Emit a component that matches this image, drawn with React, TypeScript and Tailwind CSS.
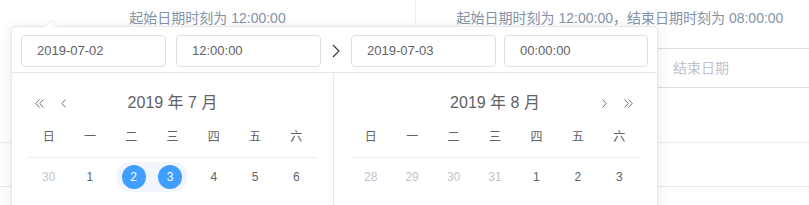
import React from 'react';

type Day = { n: number; muted?: boolean; start?: boolean; end?: boolean };

const WEEK = ['日', '一', '二', '三', '四', '五', '六'];

function DoubleChevron({ dir }: { dir: 'left' | 'right' }) {
  const d = dir === 'left' ? 'M4.5 0.5 L0.8 4.5 L4.5 8.5 M8.5 0.5 L4.8 4.5 L8.5 8.5' : 'M0.5 0.5 L4.2 4.5 L0.5 8.5 M4.5 0.5 L8.2 4.5 L4.5 8.5';
  return (
    <svg width="9" height="9" viewBox="0 0 9 9" fill="none">
      <path d={d} stroke="#606266" strokeWidth="0.9" />
    </svg>
  );
}

function Chevron({ dir }: { dir: 'left' | 'right' }) {
  const d = dir === 'left' ? 'M4.5 0.5 L0.8 4.5 L4.5 8.5' : 'M0.5 0.5 L4.2 4.5 L0.5 8.5';
  return (
    <svg width="5" height="9" viewBox="0 0 5 9" fill="none">
      <path d={d} stroke="#606266" strokeWidth="0.9" />
    </svg>
  );
}

function TimeInput({ value, width }: { value: string; width: string }) {
  return (
    <div className={`${width} h-[32px] shrink-0 rounded-[4px] border border-[#dcdfe6] bg-white px-[15px] flex items-center text-[13px] text-[#606266]`}>
      {value}
    </div>
  );
}

function DayCell({ day }: { day: Day }) {
  const range = day.start || day.end;
  return (
    <div className="h-[38px] py-[4px]">
      <div
        className={`h-[30px] py-[3px] flex justify-center ${
          day.start ? 'ml-[5px] rounded-l-[15px] bg-[#f2f6fc]' : ''
        } ${day.end ? 'mr-[5px] rounded-r-[15px] bg-[#f2f6fc]' : ''}`}
      >
        <span
          className={`w-[24px] h-[24px] rounded-full flex items-center justify-center text-[12px] ${
            range ? 'bg-[#409eff] text-white' : day.muted ? 'text-[#c0c4cc]' : 'text-[#606266]'
          }`}
        >
          {day.n}
        </span>
      </div>
    </div>
  );
}

function MonthPanel({ title, days, side }: { title: string; days: Day[]; side: 'left' | 'right' }) {
  return (
    <div className={`w-[322px] p-[16px] ${side === 'left' ? 'border-r border-[#e4e7ed]' : ''}`}>
      <div className="h-[28px] grid grid-cols-[1fr_auto_1fr] items-center">
        <div className="flex items-center pl-[7px] gap-[17px]">
          {side === 'left' && (
            <>
              <DoubleChevron dir="left" />
              <Chevron dir="left" />
            </>
          )}
        </div>
        <div className="text-[16px] text-[#606266]">{title}</div>
        <div className="flex items-center justify-end pr-[7px] gap-[17px]">
          {side === 'right' && (
            <>
              <Chevron dir="right" />
              <DoubleChevron dir="right" />
            </>
          )}
        </div>
      </div>
      <div className="grid grid-cols-7 border-b border-[#ebeef5]">
        {WEEK.map((w) => (
          <div key={w} className="h-[40px] flex items-center justify-center text-[12px] text-[#606266]">
            {w}
          </div>
        ))}
      </div>
      <div className="grid grid-cols-7">
        {days.map((d, i) => (
          <DayCell key={i} day={d} />
        ))}
      </div>
    </div>
  );
}

export default function App() {
  const july: Day[] = [{ n: 30, muted: true }, { n: 1 }, { n: 2, start: true }, { n: 3, end: true }, { n: 4 }, { n: 5 }, { n: 6 }];
  const august: Day[] = [
    { n: 28, muted: true },
    { n: 29, muted: true },
    { n: 30, muted: true },
    { n: 31, muted: true },
    { n: 1 },
    { n: 2 },
    { n: 3 },
  ];

  return (
    <div className="relative w-[809px] h-[205px] overflow-hidden bg-white font-['Liberation_Sans','Noto_Sans_CJK_SC',sans-serif]">
      {/* page behind the popper */}
      <div className="flex w-[832px] h-[142px]">
        <div className="w-[416px] border-r border-[#eff2f6] pt-[8px] text-center">
          <span className="block text-[14px] leading-[20px] text-[#8492a6]">起始日期时刻为 12:00:00</span>
        </div>
        <div className="w-[416px] pt-[8px]">
          <span className="block pr-[8px] text-center text-[14px] leading-[20px] text-[#8492a6]">
            起始日期时刻为 12:00:00，结束日期时刻为 08:00:00
          </span>
          <div className="mt-[20px] ml-[8px] w-[400px] h-[40px] rounded-[4px] border border-[#dcdfe6] pl-[248px] flex items-center text-[14px] text-[#c0c4cc]">
            结束日期
          </div>
        </div>
      </div>
      <div className="h-[45px] border-t border-b border-t-[#e6ebf5] border-b-[#e8e8e8]" />

      {/* date range popper */}
      <div className="absolute left-[11px] top-[26px] w-[647px] h-[200px] rounded-[4px] border border-[#e4e7ed] bg-white shadow-[0_2px_12px_0_rgba(0,0,0,0.1)]">
        <div className="absolute left-[33px] top-[-7px] w-0 h-0 border-x-[6px] border-x-transparent border-b-[6px] border-b-[#e4e7ed]" />
        <div className="absolute left-[33px] top-[-6px] w-0 h-0 border-x-[6px] border-x-transparent border-b-[6px] border-b-white" />

        <div className="flex items-center pt-[8px] pb-[5px] pl-[9px] border-b border-[#e4e7ed]">
          <TimeInput value="2019-07-02" width="w-[145px]" />
          <div className="ml-[10px]">
            <TimeInput value="12:00:00" width="w-[145px]" />
          </div>
          <div className="w-[30px] flex justify-center">
            <svg width="8" height="14" viewBox="0 0 8 14" fill="none">
              <path d="M1 1 L7 7 L1 13" stroke="#303133" strokeWidth="1.1" />
            </svg>
          </div>
          <TimeInput value="2019-07-03" width="w-[145px]" />
          <div className="ml-[8px]">
            <TimeInput value="00:00:00" width="w-[144px]" />
          </div>
        </div>

        <div className="flex">
          <MonthPanel title="2019 年 7 月" days={july} side="left" />
          <MonthPanel title="2019 年 8 月" days={august} side="right" />
        </div>
      </div>
    </div>
  );
}
